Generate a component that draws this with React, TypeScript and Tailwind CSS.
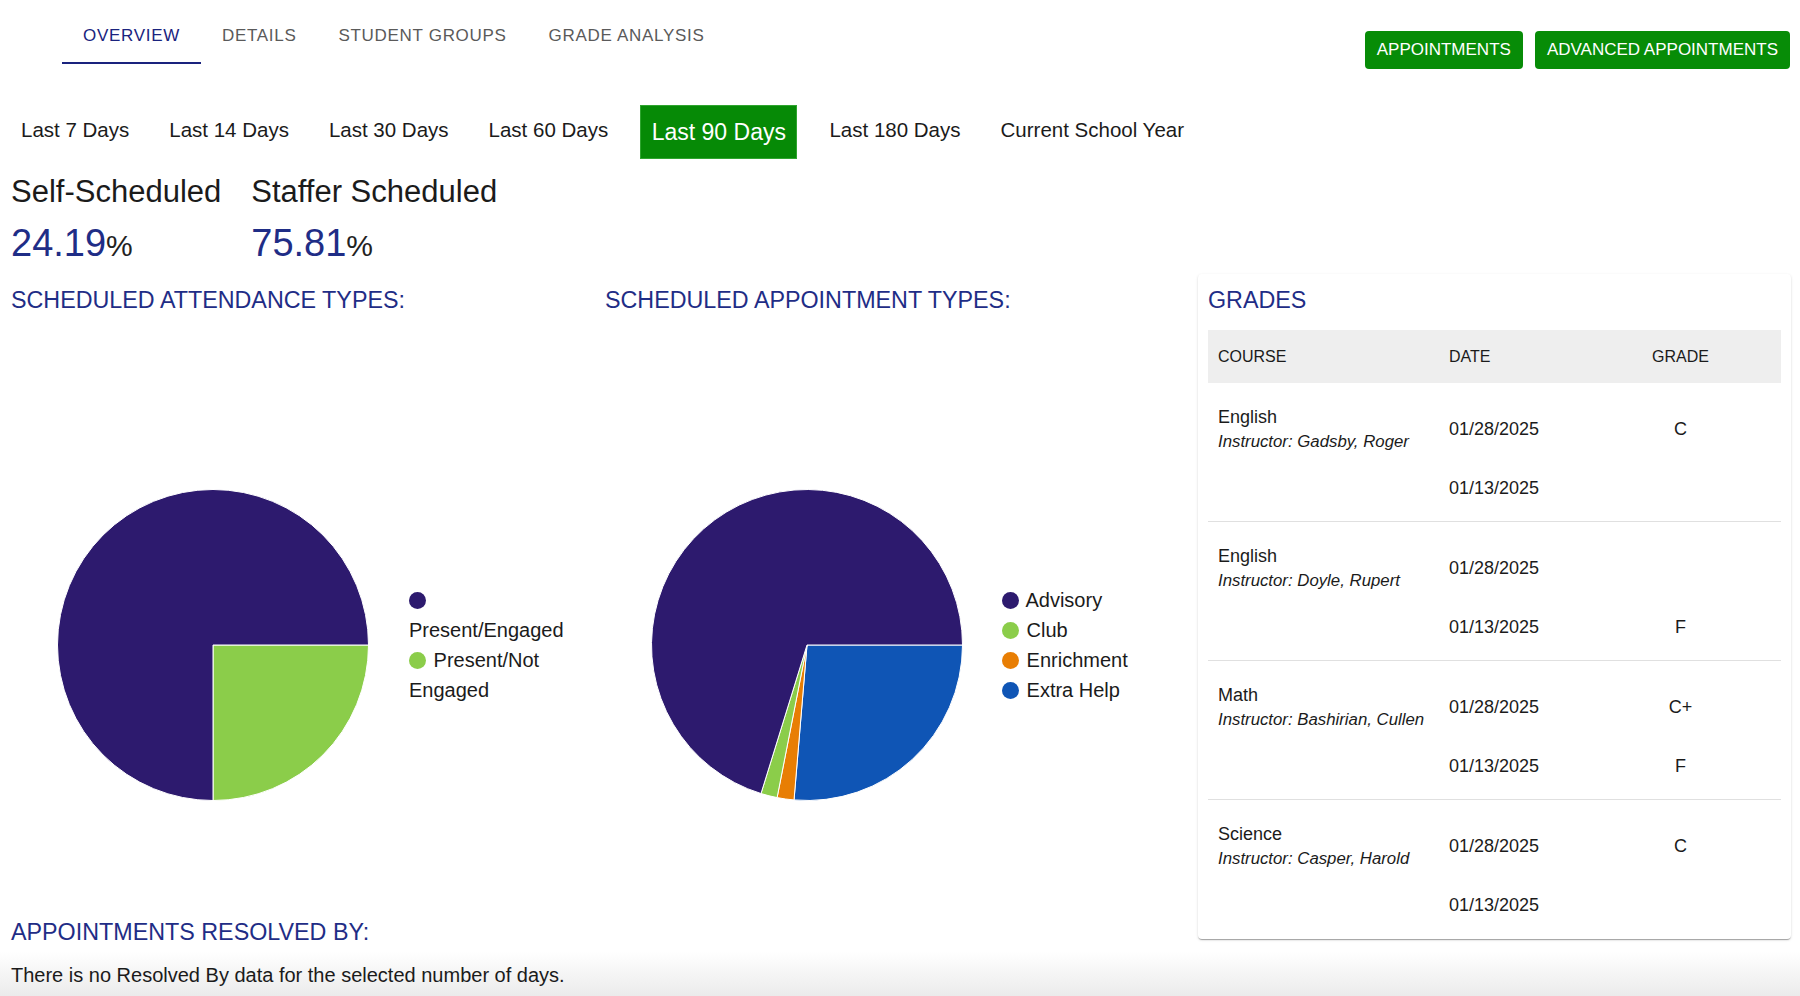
import React from 'react'

const NAVY = '#1f2d86'

type Slice = { value: number; color: string }

function Pie({ slices }: { slices: Slice[] }) {
  const r = 155.5
  const c = 156
  let a = 0
  return (
    <svg width="312" height="312" viewBox="0 0 312 312" className="shrink-0">
      {slices.map((s, i) => {
        const a0 = a
        const a1 = a + s.value * 2 * Math.PI
        a = a1
        const x0 = c + r * Math.cos(a0)
        const y0 = c + r * Math.sin(a0)
        const x1 = c + r * Math.cos(a1)
        const y1 = c + r * Math.sin(a1)
        const large = a1 - a0 > Math.PI ? 1 : 0
        return (
          <path
            key={i}
            d={`M${c} ${c}L${x0} ${y0}A${r} ${r} 0 ${large} 1 ${x1} ${y1}Z`}
            fill={s.color}
            stroke="#fff"
            strokeWidth="1"
            strokeLinejoin="round"
          />
        )
      })}
    </svg>
  )
}

function Dot({ color }: { color: string }) {
  return <span className="inline-block w-[17px] h-[17px] rounded-full mr-[2px] align-[-2px]" style={{ background: color }} />
}

const tabs = ['OVERVIEW', 'DETAILS', 'STUDENT GROUPS', 'GRADE ANALYSIS']
const ranges = ['Last 7 Days', 'Last 14 Days', 'Last 30 Days', 'Last 60 Days', 'Last 90 Days', 'Last 180 Days', 'Current School Year']

const grades = [
  { course: 'English', instructor: 'Gadsby, Roger', items: [['01/28/2025', 'C'], ['01/13/2025', '']] },
  { course: 'English', instructor: 'Doyle, Rupert', items: [['01/28/2025', ''], ['01/13/2025', 'F']] },
  { course: 'Math', instructor: 'Bashirian, Cullen', items: [['01/28/2025', 'C+'], ['01/13/2025', 'F']] },
  { course: 'Science', instructor: 'Casper, Harold', items: [['01/28/2025', 'C'], ['01/13/2025', '']] },
]

export default function App() {
  return (
    <div className="w-[1800px] h-[996px] overflow-hidden text-[#1b1b1b] font-['Liberation_Sans',Arial,sans-serif] bg-[linear-gradient(180deg,#ffffff_0px,#ffffff_952px,#ebebeb_996px)]">
      {/* top bar */}
      <div className="flex justify-between items-start h-[64px]">
        <div className="flex pl-[62px]">
          {tabs.map((t, i) => (
            <div
              key={t}
              className={
                'px-[21px] pt-[24px] pb-[14px] text-[17px] leading-[24px] tracking-[0.7px] border-b-2 ' +
                (i === 0 ? 'text-[#1a237e] border-[#1a237e]' : 'text-[#5a5a5a] border-transparent')
              }
            >
              {t}
            </div>
          ))}
        </div>
        <div className="flex gap-[12px] pt-[31px] pr-[10px]">
          <button className="h-[38px] px-[12px] rounded-[4px] bg-[#078c07] text-white text-[17px]">APPOINTMENTS</button>
          <button className="h-[38px] px-[12px] rounded-[4px] bg-[#078c07] text-white text-[17px]">ADVANCED APPOINTMENTS</button>
        </div>
      </div>

      {/* date ranges */}
      <div className="flex items-center mt-[41px] pl-[1px] h-[54px]">
        {ranges.map((r) =>
          r === 'Last 90 Days' ? (
            <div key={r} className="mx-[12px] h-[54px] px-[10.5px] flex items-center bg-[#068a06] border border-[#2fa52f] text-white text-[23px]">
              {r}
            </div>
          ) : (
            <div key={r} className="px-[20px] text-[20.5px] leading-[24px] mb-[4px]">
              {r}
            </div>
          )
        )}
      </div>

      {/* stats */}
      <div className="flex gap-[30px] pl-[11px] mt-[15px]">
        {[
          ['Self-Scheduled', '24.19'],
          ['Staffer Scheduled', '75.81'],
        ].map(([label, val]) => (
          <div key={label}>
            <div className="text-[31px] leading-[36px]">{label}</div>
            <div className="mt-[11px] leading-[44px]">
              <span className="text-[38px]" style={{ color: NAVY }}>{val}</span>
              <span className="text-[30px] text-[#222]">%</span>
            </div>
          </div>
        ))}
      </div>

      {/* main */}
      <div className="flex mt-[1px]">
        <div className="w-[1198px]">
          <div className="flex pt-[13px]">
            <div className="w-[605px] pl-[11px]">
              <div className="text-[23.3px] leading-[26px]" style={{ color: NAVY }}>SCHEDULED ATTENDANCE TYPES:</div>
              <div className="flex items-center gap-[40px] pl-[46px] mt-[176px]">
                <Pie
                  slices={[
                    { value: 0.25, color: '#8bcd4a' },
                    { value: 0.75, color: '#2d1a6e' },
                  ]}
                />
                <div className="w-[165px] text-[20px] leading-[30px]">
                  <div>
                    <Dot color="#2d1a6e" /> Present/Engaged
                  </div>
                  <div>
                    <Dot color="#8bcd4a" /> Present/Not Engaged
                  </div>
                </div>
              </div>
            </div>
            <div className="w-[593px]">
              <div className="text-[23.3px] leading-[26px]" style={{ color: NAVY }}>SCHEDULED APPOINTMENT TYPES:</div>
              <div className="flex items-center gap-[39px] pl-[46px] mt-[176px]">
                <Pie
                  slices={[
                    { value: 0.2633, color: '#0f55b5' },
                    { value: 0.0175, color: '#e87e04' },
                    { value: 0.017, color: '#8bcd4a' },
                    { value: 0.7022, color: '#2d1a6e' },
                  ]}
                />
                <div className="text-[20px] leading-[30px]">
                  {[
                    ['Advisory', '#2d1a6e'],
                    ['Club', '#8bcd4a'],
                    ['Enrichment', '#e87e04'],
                    ['Extra Help', '#0f55b5'],
                  ].map(([l, c]) => (
                    <div key={l} className="whitespace-nowrap">
                      <Dot color={c} /> {l}
                    </div>
                  ))}
                </div>
              </div>
            </div>
          </div>

          <div className="pl-[11px] mt-[118px]">
            <div className="text-[23.3px] leading-[26px]" style={{ color: NAVY }}>APPOINTMENTS RESOLVED BY:</div>
            <div className="mt-[18px] text-[20px] leading-[24px] text-[#1b1b1b]">
              There is no Resolved By data for the selected number of days.
            </div>
          </div>
        </div>

        {/* grades card */}
        <div className="w-[593px] h-[665px] bg-white rounded-[4px] px-[10px] pt-[13px] shadow-[0_2px_1px_-1px_rgba(0,0,0,0.2),0_1px_1px_0_rgba(0,0,0,0.14),0_1px_3px_0_rgba(0,0,0,0.12)]">
          <div className="text-[23.3px] leading-[26px]" style={{ color: NAVY }}>GRADES</div>
          <div className="mt-[17px] grid grid-cols-[231px_141px_1fr] h-[53px] items-center bg-[#eeeeee] text-[16px] text-[#1b1b1b]">
            <div className="pl-[10px]">COURSE</div>
            <div className="pl-[10px]">DATE</div>
            <div className="text-center">GRADE</div>
          </div>
          {grades.map((g, i) => (
            <div
              key={i}
              className={
                'grid grid-cols-[231px_141px_1fr] h-[138px] ' + (i < grades.length - 1 ? 'box-content border-b border-[#e0e0e0]' : '')
              }
            >
              <div className="pl-[10px] pt-[22px]">
                <div className="text-[18px] leading-[24px]">{g.course}</div>
                <div className="text-[16.8px] leading-[25px] italic">Instructor: {g.instructor}</div>
              </div>
              <div className="pt-[17px]">
                {g.items.map(([d], j) => (
                  <div key={j} className="h-[59px] flex items-center pl-[10px] text-[18px]">
                    {d}
                  </div>
                ))}
              </div>
              <div className="pt-[17px]">
                {g.items.map(([, gr], j) => (
                  <div key={j} className="h-[59px] flex items-center justify-center text-[18px]">
                    {gr}
                  </div>
                ))}
              </div>
            </div>
          ))}
        </div>
      </div>
    </div>
  )
}
